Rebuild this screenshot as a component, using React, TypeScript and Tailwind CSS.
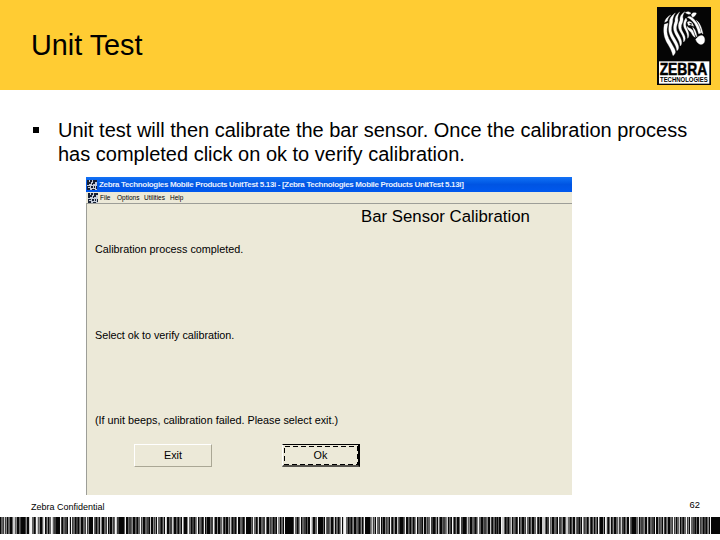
import type { ReactNode } from "react";

const TONES = ["#080808", "#3e3e3e", "#626262", "#868686", "#a8a8a8"];
const PATTERN = "022101302200211230021022013002211020031220110230";

// columns between the dark groups of the code
const WHITE = [
  30, 31, 36, 44, 51, 60, 68, 71, 86, 93, 107, 115, 125, 140, 157, 165, 182, 188, 197, 204, 213, 237,
  245, 253, 265, 277, 284, 294, 300, 310, 317, 325, 341, 344, 345, 364, 376, 380, 390, 405, 416, 430,
  452, 460, 478, 501, 518, 526, 536, 549, 558, 582, 598, 605, 629, 655, 673, 686, 690, 710,
];
const PALE = [
  4, 13, 14, 29, 37, 43, 52, 69, 100, 116, 150, 166, 172, 222, 230, 258, 311, 334, 343, 372, 397,
  423, 438, 447, 467, 490, 502, 503, 511, 542, 543, 544, 566, 567, 575, 589, 606, 610, 618, 621, 638, 647, 663, 679, 699,
];
const BLACK = [[22, 24], [56, 58], [89, 91], [120, 122], [207, 209], [247, 249], [285, 292], [319, 322], [366, 369], [400, 402], [463, 465], [600, 602], [633, 635], [711, 719]];

function toneAt(x: number) {
  if (WHITE.includes(x)) return "#f4f4f4";
  if (PALE.includes(x)) return "#cccccc";
  if (BLACK.some(([from, to]) => x >= from && x <= to)) return "#060606";
  return TONES[Number(PATTERN[(x + Math.floor(x / 31) * 7) % PATTERN.length])];
}

function Barcode() {
  return (
    <svg className="block h-[17px] w-[720px]" viewBox="0 0 720 17" shapeRendering="crispEdges">
      {Array.from({ length: 720 }, (_, x) => (
        <rect key={x} x={x} y="0" width="1" height="17" fill={toneAt(x)} />
      ))}
    </svg>
  );
}

function ZebraLogo() {
  return (
    <svg className="h-[78px] w-[54px]" viewBox="0 0 162 234">
      <rect width="162" height="234" fill="#050505" />
      <g fill="#fff" stroke="#fff" strokeWidth="1">
        <path d="M41 24C31 29 24 38 23 46L31 42C32 35 36 29 41 24Z" />
        <path d="M22 52C18 73 21 94 33 112C40 123 44 132 48 146C55 141 57 135 53 127C47 113 35 99 31 83C28 72 30 61 33 49Z" />
        <path d="M55 18C42 27 36 37 37 49C35 62 34 72 38 82C44 100 57 111 60 131C66 126 66 119 62 110C55 94 45 84 43 70C42 58 48 47 47 37C49 29 51 23 55 18Z" />
        <path d="M68 15C58 22 53 32 54 43C49 55 48 67 53 77C59 91 68 100 70 117C76 111 74 101 70 92C64 79 57 73 58 60C60 50 65 42 62 32C63 25 65 19 68 15Z" />
        <path d="M84 14C73 20 68 29 69 40C63 51 63 62 68 71C74 82 80 88 80 105C86 100 86 91 81 82C75 71 71 66 73 55C77 45 80 39 77 30C78 23 80 18 84 14Z" />
        <path d="M87 33C78 45 78 57 84 67C89 76 92 83 92 94C98 87 95 76 91 68C85 58 84 48 90 40Z" />
        <path d="M85 17C91 13 97 14 102 19L96 22C92 20 89 20 85 17Z" />
        <path d="M103 24C106 16 112 17 118 18C117 24 113 28 107 31Z" />
        <path d="M91 31C96 25 105 29 112 38C122 49 128 60 132 78L125 80C121 64 115 51 107 43C102 37 97 34 91 31Z" />
        <path d="M91 46C94 42 101 43 106 49L110 58L101 54L94 55Z" />
        <path d="M90 58C95 65 103 63 108 72L115 91C109 90 106 83 102 76C98 71 92 70 90 58Z" />
        <path d="M107 61C114 66 118 76 120 90L115 84C113 75 109 70 107 61Z" />
        <path d="M118 40C129 48 134 62 138 81L133 77C131 62 125 51 118 40Z" />
        <path d="M116 97C123 89 131 83 138 87C145 92 145 107 137 111C129 115 120 109 116 97Z" />
      </g>
      <path d="M97 47L106 50L103 53L98 51Z" />
      <rect x="6" y="163" width="151" height="67" fill="#fff" />
      <text x="8" y="205" textLength="143" lengthAdjust="spacingAndGlyphs" fontFamily="Liberation Sans, sans-serif" fontSize="50" fontWeight="700" stroke="#000" strokeWidth="1.5">
        ZEBRA
      </text>
      <text x="9" y="225" textLength="143" lengthAdjust="spacingAndGlyphs" fontFamily="Liberation Sans, sans-serif" fontSize="19" fontWeight="700">
        TECHNOLOGIES
      </text>
    </svg>
  );
}

function AppIcon() {
  return (
    <svg className="h-[10px] w-[10px] shrink-0" viewBox="0 0 10 10" shapeRendering="crispEdges">
      <rect width="10" height="10" fill="#c4ccd8" />
      <path d="M0 0h2v2h2v2H2v1H0zM3 0h2v2H3zM6 0h4v2H8v2H6zM5 3h1v2H5zM0 6h3v1H1v1h2v2H0zM4 6h2v2H4zM7 6h1v2H7zM9 6h1v3H9zM5 9h3v1H5z" fill="#172033" />
    </svg>
  );
}

function WinButton({ children, focused = false }: { children: ReactNode; focused?: boolean }) {
  return focused ? (
    <button className="relative flex h-[23px] w-[78px] items-center justify-center border border-t-black border-r-2 border-r-black border-b-2 border-b-[#55534d] border-l-white text-[10.8px] leading-none">
      <svg className="absolute top-px left-px h-[19px] w-[74px]" viewBox="0 0 74 19" shapeRendering="crispEdges">
        <rect x="0.5" y="0.5" width="73" height="18" fill="none" stroke="#000" strokeDasharray="5 3" />
      </svg>
      {children}
    </button>
  ) : (
    <button className="flex h-[23px] w-[78px] items-center justify-center border border-t-white border-r-[#aaa795] border-b-[#aaa795] border-l-white text-[10.8px] leading-none">
      {children}
    </button>
  );
}

export default function App() {
  return (
    <div className="flex h-[540px] w-[720px] flex-col overflow-hidden bg-white font-['Liberation_Sans',Arial,sans-serif] text-black">
      <header className="flex h-[90px] shrink-0 items-start justify-between bg-[#ffcc33] pt-[7px] pr-[9px] pl-[31px]">
        <h1 className="pt-[22px] text-[28.8px] leading-[32px]">Unit Test</h1>
        <ZebraLogo />
      </header>

      <main className="flex h-[405px] shrink-0 flex-col pt-[28px]">
        <div className="flex h-[59px] shrink-0 pl-[33px]">
          <span className="mt-[9px] mr-[19px] h-[6px] w-[6px] shrink-0 bg-black" />
          <p className="text-[20px] leading-[24px] whitespace-nowrap">
            Unit test will then calibrate the bar sensor. Once the calibration process
            <br />
            has completed click on ok to verify calibration.
          </p>
        </div>

        <section className="ml-[86px] flex h-[318px] w-[486px] flex-col bg-[#ece9d8]">
          <div className="flex h-[15px] shrink-0 items-center gap-[2px] bg-gradient-to-b from-[#1472f5] via-[#0054e3] to-[#0058ee] pl-[1px] text-[8px] tracking-[-0.33px] font-bold whitespace-nowrap text-[#e4efff]">
            <AppIcon />
            <span>Zebra Technologies Mobile Products UnitTest 5.13i - [Zebra Technologies Mobile Products UnitTest 5.13i]</span>
          </div>
          <nav className="flex h-[11px] shrink-0 items-center pl-[2px] text-[6.5px]">
            <AppIcon />
            <span className="ml-[2px] w-[17px]">File</span>
            <span className="w-[27px]">Options</span>
            <span className="w-[26px]">Utilities</span>
            <span>Help</span>
          </nav>
          <div className="flex grow flex-col border-t border-l border-[#9d9e98] pl-[8px] text-[10.8px] leading-[14px]">
            <h2 className="mt-[3px] ml-[266px] text-[16.8px] leading-[20px]">Bar Sensor Calibration</h2>
            <p className="mt-[15px]">Calibration process completed.</p>
            <p className="mt-[72px] tracking-[-0.04px]">Select ok to verify calibration.</p>
            <p className="mt-[71px]">(If unit beeps, calibration failed. Please select exit.)</p>
            <div className="mt-[17px] ml-[39px] flex gap-[70px]">
              <WinButton>Exit</WinButton>
              <WinButton focused>Ok</WinButton>
            </div>
          </div>
        </section>
      </main>

      <footer className="flex flex-col">
        <div className="flex h-[22px] items-start justify-between pr-[20px] pl-[31px]">
          <span className="pt-[6px] text-[9px] leading-[12px]">Zebra Confidential</span>
          <span className="pt-[4px] text-[9.33px] leading-[12px]">62</span>
        </div>
        <Barcode />
      </footer>
    </div>
  );
}
